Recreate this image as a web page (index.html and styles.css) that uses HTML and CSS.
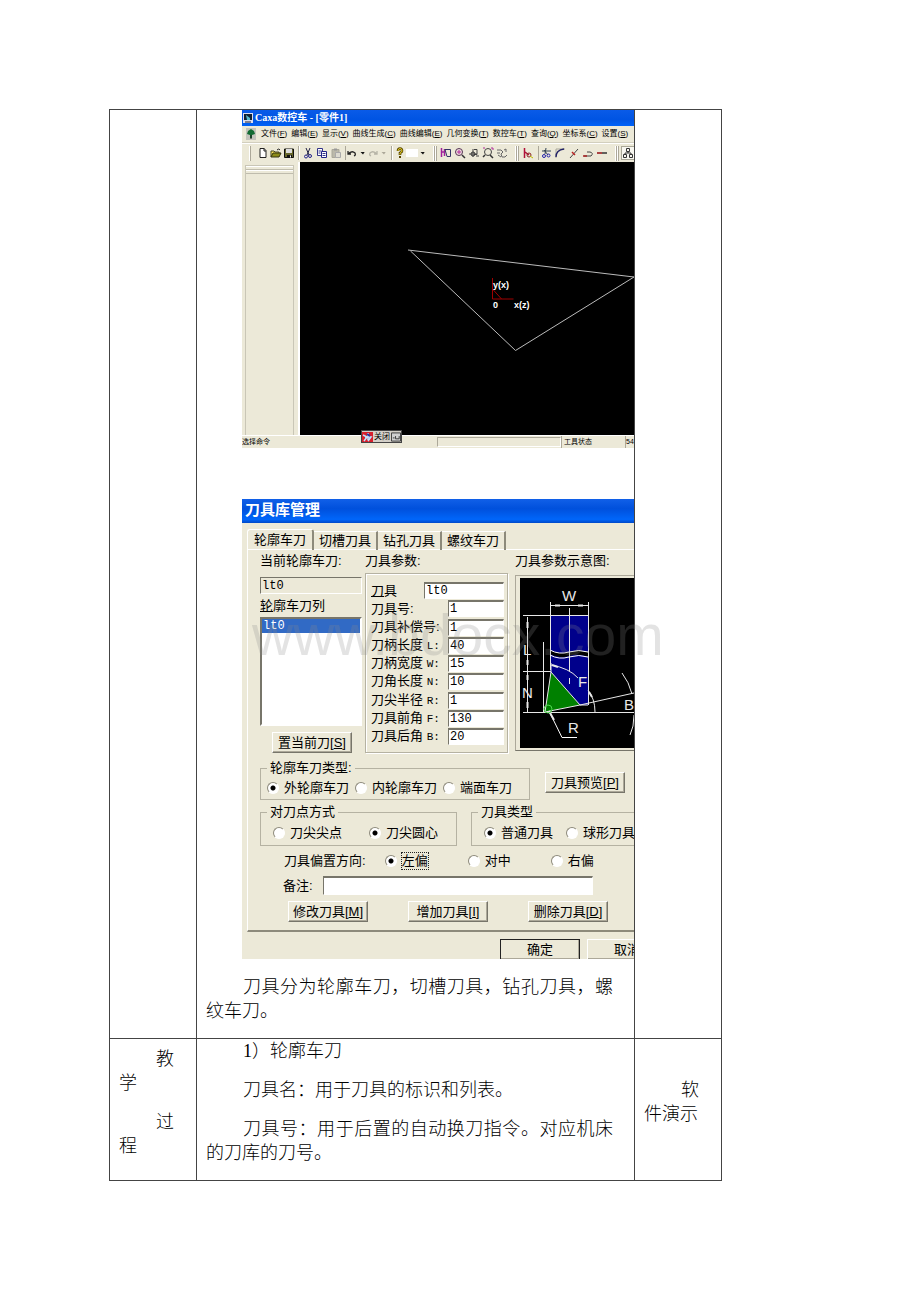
FILE: index.html
```html
<!DOCTYPE html>
<html lang="zh-CN">
<head>
<meta charset="utf-8">
<title>数控车教案</title>
<link rel="stylesheet" href="styles.css">
</head>
<body>
<main class="sheet">
<table class="plan">
<colgroup><col class="col-side"><col><col class="col-side"></colgroup>
<tbody>
<tr>
<td></td>
<td class="main-cell">
<section class="shot cad">
  <header class="cad-title">
    <svg width="10" height="10" viewBox="0 0 10 10"><rect width="10" height="10" fill="#dde"/><rect x="1" y="1" width="8" height="6" fill="#123"/><path d="M3 2l4 3v2H4z" fill="#5bc"/><path d="M2 9h6" stroke="#223"/></svg>
    <span>Caxa数控车 - [零件1]</span>
  </header>
  <nav class="cad-menu">
    <svg width="10" height="12" viewBox="0 0 10 12"><rect width="10" height="12" fill="#c4c4bc"/><path d="M5 1l3 2 1 3-3 1v3H4V7L1 6l1-3z" fill="#126b32"/><path d="M5 7v4" stroke="#222"/></svg>
    <span>文件(<u>F</u>)</span><span>编辑(<u>E</u>)</span><span>显示(<u>V</u>)</span><span>曲线生成(<u>C</u>)</span><span>曲线编辑(<u>E</u>)</span><span>几何变换(<u>T</u>)</span><span>数控车(<u>T</u>)</span><span>查询(<u>Q</u>)</span><span>坐标系(<u>C</u>)</span><span>设置(<u>S</u>)</span>
  </nav>
  <div class="cad-tools">
    <i class="grip first"></i>
    <button class="tool" aria-label="新建"><svg viewBox="0 0 12 12"><path d="M3 1.500h4l2 2v7H3z" fill="#fff" stroke="#222"/><path d="M7 1v3h2" fill="none" stroke="#222"/></svg></button>
    <button class="tool" aria-label="打开"><svg viewBox="0 0 12 12"><path d="M1 10V4h3l1 1h4v2" fill="#ffe860" stroke="#442"/><path d="M1 10l2-4h8l-2 4z" fill="#8c8a18" stroke="#331"/><path d="M7 3q2-2 3 0" fill="none" stroke="#222"/></svg></button>
    <button class="tool" aria-label="保存"><svg viewBox="0 0 12 12"><path d="M1.500 2h9v8.500h-9z" fill="#66662a" stroke="#111"/><path d="M3 2h6v4H3z" fill="#ddd"/><path d="M4 8h5v3H4z" fill="#111"/><path d="M7 8.500h1v2H7z" fill="#fff"/></svg></button>
    <i class="sep"></i>
    <button class="tool wide" aria-label="剪切"><svg viewBox="0 0 12 12"><path d="M4 1l3 7M8 1L5 8" stroke="#224" fill="none"/><circle cx="4" cy="9.500" r="1.500" fill="none" stroke="#228"/><circle cx="8" cy="9" r="1.500" fill="none" stroke="#228"/></svg></button>
    <button class="tool wide" aria-label="复制"><svg viewBox="0 0 12 12"><path d="M1.500 1.500h5v7h-5z" fill="#fff" stroke="#338"/><path d="M5.500 4.500h5v6h-5z" fill="#fff" stroke="#228"/><path d="M2.500 4h3M2.500 6h2M6.500 6.500h3M6.500 8.500h3" stroke="#338"/></svg></button>
    <button class="tool" aria-label="粘贴"><svg viewBox="0 0 12 12"><path d="M2 2.500h7v8H2z" fill="#bbb9aa" stroke="#aaa89a"/><path d="M4 1.500h3v2H4z" fill="#999"/><path d="M5.500 5.500h5v5h-5z" fill="#dddbd0" stroke="#aaa"/></svg></button>
    <i class="sep tight"></i>
    <button class="tool slim" aria-label="撤销"><svg viewBox="0 0 12 12"><path d="M2 4v3h3M2 7q4-4 7-1q1 2-1 3" fill="none" stroke="#222" stroke-width="1.300"/></svg></button>
    <i class="drop"></i>
    <button class="tool slim" aria-label="重做"><svg viewBox="0 0 12 12"><path d="M10 4v3H7M10 7Q6 3 3 6q-1 2 1 3" fill="none" stroke="#b5b3a6" stroke-width="1.300"/></svg></button>
    <i class="drop dim"></i>
    <i class="sep"></i>
    <button class="tool slim" aria-label="帮助"><svg viewBox="0 0 12 12"><path d="M4 4q0-2.500 2-2.500T8 4Q8 5 6 6v2" fill="none" stroke="#554400" stroke-width="2.600"/><path d="M4 4q0-2.500 2-2.500T8 4Q8 5 6 6v1.500" fill="none" stroke="#e8d020" stroke-width="1"/><rect x="5" y="9" width="2" height="2" fill="#554400"/></svg></button>
    <i class="swatch"></i>
    <i class="drop"></i>
    <i class="grip"></i>
    <button class="tool wide" aria-label="重画"><svg viewBox="0 0 12 12"><path d="M1.500 1v9M1.500 5h3M4.500 2v7" stroke="#a0209a" fill="none" stroke-width="1.500"/><path d="M5 2.500h5.500v7H7z" fill="none" stroke="#336"/></svg></button>
    <button class="tool wide" aria-label="放大"><svg viewBox="0 0 12 12"><circle cx="5" cy="5" r="3.500" fill="#edd" stroke="#535"/><path d="M3 5h4M5 3v4" stroke="#b02a9a"/><path d="M8 8l3 3" stroke="#333" stroke-width="1.500"/></svg></button>
    <button class="tool wide" aria-label="平移"><svg viewBox="0 0 12 12"><path d="M1 7h8M5 2v8M6 2.500h3v5H6" fill="none" stroke="#444"/><circle cx="5" cy="7" r="2" fill="none" stroke="#333"/><path d="M8 9h3" stroke="#444"/></svg></button>
    <button class="tool wide" aria-label="窗口"><svg viewBox="0 0 12 12"><circle cx="6" cy="5" r="3.500" fill="none" stroke="#444"/><path d="M3 8l-2 2M8 8l3 3" stroke="#333" stroke-width="1.500"/><path d="M9 1h2v2M1 1h2" fill="none" stroke="#b02a9a"/></svg></button>
    <button class="tool wide" aria-label="旋转"><svg viewBox="0 0 12 12"><path d="M1 3h4l2 2-2 2 1 3h3l2-2M1 6h3M2 8l3 2M8 3l2-1v3" fill="none" stroke="#666"/></svg></button>
    <i class="grip"></i>
    <button class="tool wide" aria-label="直线"><svg viewBox="0 0 12 12"><path d="M2.500 1v10M3 5l4 3" stroke="#b01038" fill="none" stroke-width="1.500"/><circle cx="7" cy="8" r="2" fill="none" stroke="#822"/><path d="M8 9l3 2" stroke="#bb0"/></svg></button>
    <i class="sep tight"></i>
    <button class="tool wide" aria-label="裁剪"><svg viewBox="0 0 12 12"><path d="M2 4h9M6 1L5 7M4 3l4 5" stroke="#345" fill="none"/><circle cx="4" cy="9" r="1.500" fill="none" stroke="#22a"/><circle cx="8.500" cy="8.500" r="1.500" fill="none" stroke="#22a"/></svg></button>
    <button class="tool wide" aria-label="圆角"><svg viewBox="0 0 12 12"><path d="M2 11V2h9" fill="none" stroke="#a9a79a"/><path d="M2 10q0-7 8-8" fill="none" stroke="#226" stroke-width="1.300"/></svg></button>
    <button class="tool wide" aria-label="打断"><svg viewBox="0 0 12 12"><path d="M2 11l8-9" stroke="#444"/><path d="M4 5l3 3" stroke="#b22" stroke-width="1.500"/></svg></button>
    <button class="tool wide" aria-label="组合"><svg viewBox="0 0 12 12"><path d="M2 9h7q3-3-1-4H5" fill="none" stroke="#444"/><path d="M1 9h4" stroke="#a22" stroke-width="1.500"/></svg></button>
    <button class="tool wide" aria-label="拉伸"><svg viewBox="0 0 12 12"><path d="M1 6h5" stroke="#a44" stroke-width="2"/><path d="M6 6h5" stroke="#333" stroke-width="1.500"/></svg></button>
    <i class="grip"></i>
    <button class="tool wide pressed" aria-label="结构"><svg viewBox="0 0 12 12"><path d="M4.500 1.500h3v3h-3zM1.500 7.500h3v3h-3zM7.500 7.500h3v3h-3zM6 5v1M3 7V6h6v1" fill="none" stroke="#333"/></svg></button>
  </div>
  <div class="cad-work">
    <div class="cad-side"><div class="cad-side-panel"></div></div>
    <svg class="cad-view" viewBox="300 162 334 273" preserveAspectRatio="xMinYMin slice">
      <path d="M408 250L634 277L515.500 350.500L410.500 251" fill="none" stroke="#bbb" stroke-width="1"/>
      <path d="M492.500 278v21h21M492.500 289l9 10" fill="none" stroke="#a00000"/>
      <text x="493" y="288">y(x)</text><text x="493" y="308">0</text><text x="514" y="308">x(z)</text>
    </svg>
  </div>
  <footer class="cad-status"><span class="status-text">选择命令</span><span class="status-slot"></span><span class="status-mode">工具状态</span><span class="status-num">54</span></footer>
  <div class="ime"><svg width="11" height="10" viewBox="0 0 11 10"><rect width="11" height="10" fill="#d8202c"/><path d="M1 3l4 2-3 4M6 1v7M3 5h6l-3 4" stroke="#bfe4ff" fill="none" stroke-width="1.500"/><path d="M5 2l3 2" stroke="#2438a0" stroke-width="2"/></svg><span>关闭</span><svg width="10" height="10" viewBox="0 0 11 10"><path d="M.5.500h10v9H.5z" fill="#d0d0d0" stroke="#333"/><path d="M2 6h2M5 4v3h4V4" fill="none" stroke="#333"/></svg></div>
</section>

<section class="shot dialog">
  <header class="dialog-title">刀具库管理</header>
  <div class="tabs"><button class="tab active">轮廓车刀</button><button class="tab">切槽刀具</button><button class="tab">钻孔刀具</button><button class="tab">螺纹车刀</button></div>
  <div class="tab-page">
    <div class="upper">
      <div class="current">
        <label for="cur">当前轮廓车刀:</label>
        <input class="field grey" id="cur" value="lt0" readonly>
        <label for="list"><u>轮</u>廓车刀列</label>
        <select class="list" id="list" size="6"><option>lt0</option></select>
        <button class="btn">置当前刀[<u>S</u>]</button>
      </div>
      <div class="params">
        <span class="caption">刀具参数:</span>
        <div class="param-box">
          <div class="param"><label for="p0"><u>刀</u>具</label><input class="field long" id="p0" value="lt0"></div>
          <div class="param"><label for="p1">刀具号:</label><input class="field" id="p1" value="1"></div>
          <div class="param"><label for="p2">刀具补偿号:</label><input class="field" id="p2" value="1"></div>
          <div class="param"><label for="p3">刀柄长度 <span class="key">L:</span></label><input class="field" id="p3" value="40"></div>
          <div class="param"><label for="p4">刀柄宽度 <span class="key">W:</span></label><input class="field" id="p4" value="15"></div>
          <div class="param"><label for="p5">刀角长度 <span class="key">N:</span></label><input class="field" id="p5" value="10"></div>
          <div class="param"><label for="p6">刀尖半径 <span class="key">R:</span></label><input class="field" id="p6" value="1"></div>
          <div class="param"><label for="p7">刀具前角 <span class="key">F:</span></label><input class="field" id="p7" value="130"></div>
          <div class="param"><label for="p8">刀具后角 <span class="key">B:</span></label><input class="field" id="p8" value="20"></div>
        </div>
      </div>
      <div class="preview">
        <span class="caption">刀具参数示意图:</span>
        <div class="frame">
          <svg viewBox="520 578 114 170" preserveAspectRatio="xMinYMin slice">
            <rect x="550" y="615" width="38" height="90" fill="#00008b"/>
            <path d="M550 650q9 5 19 2t19 0v5q-9-4-19-1t-19-2z" fill="#000"/>
            <path d="M551 672L580 705L545 712z" fill="#008000"/>
            <g fill="none" stroke="#e8e8e8">
              <path d="M523 615.500h65M523 671.500h28M523 712.500h111M550.500 602v68M588.500 602v103M550 605.500h38M569.500 608v63M569.500 678v6M527.500 617v95M543.500 642v70"/>
              <path d="M555 605.500h5M578 605.500h5M527.500 622v6M527.500 660v5M527.500 675v5M527.500 702v6" stroke-width="2"/>
              <path d="M550 650q9 5 19 2t19 0M550 655q9 5 19 2t19 0" stroke="#fff"/>
              <path d="M551 672L580 705L545 712z"/>
              <path d="M580 705L634 693M580 705h8M551 663v9M551 665q18 3 27 13M588 690q7 9 7 22M622 673q7 9 10 21M634 715q0 12-4 20"/>
              <path d="M549 711L562 737.500H577" stroke="#fff"/>
              <path d="M552 665l6 2M589 692l3 5M549 711l5 9" stroke-width="2"/>
              <circle cx="548" cy="709" r="4" stroke="#50d850"/>
            </g>
            <text x="562" y="601">W</text><text x="523" y="655">L</text><text x="522" y="698">N</text><text x="578" y="687">F</text><text x="624" y="710">B</text><text x="568" y="733">R</text>
          </svg>
        </div>
      </div>
    </div>
    <div class="row kinds">
      <fieldset class="group type"><legend>轮廓车刀类型:</legend>
        <label><input type="radio" name="kind" checked>外轮廓车刀</label><label><input type="radio" name="kind">内轮廓车刀</label><label><input type="radio" name="kind">端面车刀</label>
      </fieldset>
      <button class="btn">刀具预览[<u>P</u>]</button>
    </div>
    <div class="row points">
      <fieldset class="group point"><legend>对刀点方式</legend>
        <label><input type="radio" name="pt">刀尖尖点</label><label><input type="radio" name="pt" checked>刀尖圆心</label>
      </fieldset>
      <fieldset class="group shape"><legend>刀具类型</legend>
        <label><input type="radio" name="shape" checked>普通刀具</label><label><input type="radio" name="shape">球形刀具</label>
      </fieldset>
    </div>
    <div class="row offsets"><span class="offset-name">刀具偏置方向:</span>
      <label><input type="radio" name="off" checked><span class="focus">左偏</span></label><label><input type="radio" name="off">对中</label><label><input type="radio" name="off">右偏</label>
    </div>
    <div class="row note"><label for="note">备注:</label><input class="field" id="note"></div>
    <div class="row actions"><button class="btn">修改刀具[<u>M</u>]</button><button class="btn">增加刀具[<u>I</u>]</button><button class="btn">删除刀具[<u>D</u>]</button></div>
  </div>
  <div class="closing"><button class="btn default">确定</button><button class="btn">取消</button></div>
  <div class="watermark">www.bdocx.com</div>
</section>
<p>刀具分为轮廓车刀，切槽刀具，钻孔刀具，螺纹车刀。</p>
</td>
<td></td>
</tr>
<tr>
<td><p>教学</p><p>过程</p></td>
<td class="main-cell"><p>1）轮廓车刀</p><p>刀具名：用于刀具的标识和列表。</p><p>刀具号：用于后置的自动换刀指令。对应机床的刀库的刀号。</p></td>
<td><p>软件演示</p></td>
</tr>
</tbody>
</table>
</main>
</body>
</html>
```

FILE: styles.css
```css
* { box-sizing: border-box; }
body { margin: 0; background: #fff; color: #000; font-family: "Liberation Serif", "Noto Sans CJK SC", serif; font-size: 18px; line-height: 24px; }
button, input, select { margin: 0; padding: 0; font: inherit; color: inherit; border-radius: 0; }
.sheet { padding: 109px 198px 110px 109px; }

/* lesson plan table */
.plan { width: 100%; table-layout: fixed; border-collapse: collapse; }
.plan td { border: 1px solid #444; padding: 0 9px; vertical-align: middle; }
.plan .main-cell { padding-right: 21px; vertical-align: top; }
.col-side { width: 87px; }
.plan p { margin: 0 0 15px; text-indent: 37px; text-align: justify; font-weight: 300; }

/* shared window look */
.shot { position: relative; margin: 0 -21px 0 36px; background: #ece9d8; color: #000; font-family: "Liberation Sans", "Noto Sans CJK SC", sans-serif; white-space: nowrap; }
.cad { overflow: hidden; margin-bottom: 51px; font-size: 8px; line-height: 12px; }
.cad-title { display: flex; align-items: center; gap: 2px; height: 16px; padding-left: 1px; background: linear-gradient(#0a5be8, #0054e3 60%, #0062f8); color: #fff; font: bold 10px/14px "Liberation Serif", "Noto Sans CJK SC", serif; }
.cad-menu { display: flex; align-items: center; gap: 4px; height: 17px; padding-left: 4px; border-bottom: 1px solid #d2cfbe; }
.cad-menu span, .cad-menu svg { flex: none; }
.cad-menu svg { margin-right: 1px; }
.cad-tools { display: flex; align-items: center; height: 19px; padding-left: 6px; border-top: 1px solid #fff; }
.cad-tools > * { flex: none; }
.tool { width: 13px; height: 14px; border: 0; background: none; display: flex; align-items: center; justify-content: center; }
.tool svg { width: 12px; height: 12px; flex: none; }
.tool.wide { width: 14px; }
.tool.slim { width: 12px; }
.tool.pressed { background: #f8f7f0; border: 1px solid #aaa898; }
.grip { width: 12px; height: 15px; background: linear-gradient(90deg, transparent 6px, #fff 6px, #fff 7px, #aca899 7px, #aca899 8px, #fff 8px, #fff 9px, #aca899 9px, #aca899 10px, transparent 10px); }
.grip.first { width: 8px; background-position: -5px 0; }
.sep { width: 6px; height: 14px; background: linear-gradient(90deg, transparent 3px, #aca899 3px, #aca899 4px, #fff 4px, #fff 5px, transparent 5px); }
.sep.tight { width: 4px; }
.drop { width: 9px; height: 3px; background: #111; clip-path: polygon(2px 0, 7px 0, 5px 3px); }
.drop.dim { background: #aca899; }
.swatch { width: 12px; height: 8px; background: #fff; }
.cad-work { display: flex; }
.cad-side { flex: none; width: 58px; padding: 3px 4px 0 3px; border-right: 2px solid #fff; }
.cad-side-panel { height: 100%; border: solid #c9c6b6; border-width: 1px 1px 0; background: linear-gradient(#fff 1px, transparent 1px, transparent 3px, #bfbcad 3px, #bfbcad 4px, #fff 4px, #fff 5px, transparent 5px, transparent 7px, #bfbcad 7px, #bfbcad 8px, transparent 8px); }
.cad-view { flex: 1; min-width: 0; height: 273px; background: #000; }
.cad-view text { fill: #fff; font: bold 9px "Liberation Sans", sans-serif; }
.cad-status { display: flex; align-items: center; height: 13px; border-top: 1px solid #fff; font-size: 7px; }
.status-text { width: 195px; }
.status-slot { width: 124px; height: 10px; border: 1px solid; border-color: #aca899 #fff #fff #aca899; }
.status-mode { width: 64px; padding-left: 2px; border-left: 1px solid #aca899; }
.status-num { border-left: 1px solid #aca899; }
.ime { position: absolute; left: 119px; bottom: 5px; display: flex; align-items: center; gap: 1px; height: 13px; background: #d4d0c8; border: 1px solid #444; }

/* tool library dialog */
.dialog { height: 460px; margin-bottom: 16px; font-size: 13px; line-height: 16px; }
.dialog-title { height: 24px; padding: 3px 3px 0; overflow: hidden; background: linear-gradient(#1160e8, #0050dc 40%, #0066fa 85%, #0048c8); color: #fff; font-size: 15px; font-weight: bold; }
.tabs { display: flex; padding: 6px 0 0 5px; height: 27px; overflow: hidden; }
.tab { height: 19px; width: 64px; margin-top: 2px; border: 0; border-right: 2px solid #8d8a7b; border-top: 1px solid #fff; background: none; }
.tab.active { height: 21px; width: 67px; margin-top: 0; border-left: 1px solid #fff; border-radius: 3px 3px 0 0; }
.tab-page { height: 383px; margin: -1px 0 0 5px; padding: 3px 0 0 12px; border: solid #fff; border-width: 1px 0 0 1px; border-bottom: 2px solid #8d8a7b; overflow: hidden; }
.upper { display: grid; grid-template-columns: 105px 150px minmax(0, 1fr); height: 200px; }
.current { display: flex; flex-direction: column; width: 102px; }
.field { height: 17px; width: 56px; padding: 0 1px; border: 1px solid; border-color: #77756a #fff #fff #77756a; border-top-width: 2px; background: #fff; font: 12px/14px "Liberation Mono", monospace; outline: 0; }
.field.grey { width: 102px; margin: 8px 0 4px; background: #ece9d8; border-top-width: 1px; }
.list { appearance: none; width: 102px; height: 109px; margin: 3px 0 6px; border: 2px solid; border-color: #77756a #fff #fff #77756a; background: #fff; overflow: hidden; font: 12px/13px "Liberation Mono", monospace; }
.list option { min-height: 13px; padding: 0 1px; background: #316ac5; color: #fff; }
.btn { flex: none; width: 80px; height: 21px; border: 1px solid; border-color: #fff #77756a #77756a #fff; background: #ece9d8; box-shadow: inset -1px -1px #aca899; line-height: 17px; }
.current .btn { margin-left: 12px; }
.params, .preview { display: flex; flex-direction: column; }
.param-box { display: flex; flex-direction: column; justify-content: space-between; width: 143px; height: 180px; margin-top: 4px; padding: 8px 3px 7px 5px; border: 1px solid #b5b2a2; box-shadow: inset 1px 1px #fff, 1px 1px #fff; }
.param { display: flex; justify-content: space-between; align-items: center; height: 17px; }
.field.long { width: 80px; }
.key { font: 11px/16px "Liberation Mono", monospace; }
.frame { height: 176px; margin-top: 6px; border: 1px solid; border-color: #aca899 #fff #77756a #aca899; border-right: 0; padding: 2px 0 3px 4px; }
.frame svg { display: block; width: 100%; height: 170px; background: #000; }
.frame text { fill: #e8e8e8; font: 15px "Liberation Sans", sans-serif; }
.row { display: flex; align-items: center; }
.row label { display: flex; align-items: center; flex: none; }
.row input[type="radio"] { appearance: none; width: 12px; height: 12px; margin-right: 5px; border: 1px solid; border-color: #8d8a7b #fff #fff #8d8a7b; border-radius: 50%; background: #fff; }
.row input[type="radio"]:checked { background: radial-gradient(circle, #000 2px, #fff 3px); }
.kinds { margin-top: 7px; gap: 15px; align-items: flex-end; }
.kinds .btn { margin-bottom: 7px; }
.group { display: flex; align-items: center; flex: none; min-width: 0; margin: 0; padding: 0 6px; border: 1px solid #b5b2a2; height: 40px; }
.group legend { margin: 0; padding: 0 3px; }
.type { width: 270px; gap: 6px; }
.points { margin-top: 4px; gap: 14px; }
.points .group { height: 42px; padding: 0 12px; }
.points .group legend { margin-left: -6px; }
.point { width: 197px; gap: 27px; }
.shape { width: 190px; gap: 13px; }
.offsets { margin: 7px 0 0 24px; gap: 40px; }
.offset-name { margin-right: -21px; }
.focus { outline: 1px dotted #222; }
.note { margin: 7px 0 0 23px; gap: 10px; }
.note .field { width: 270px; height: 19px; }
.actions { margin: 6px 0 0 28px; gap: 40px; }
.closing { display: flex; gap: 7px; height: 27px; padding: 7px 0 0 258px; overflow: hidden; }
.closing .default { border-color: #222; }
.watermark { position: absolute; left: 10px; top: 104px; color: rgba(140, 140, 140, .24); font-size: 57px; line-height: 64px; pointer-events: none; }
```
